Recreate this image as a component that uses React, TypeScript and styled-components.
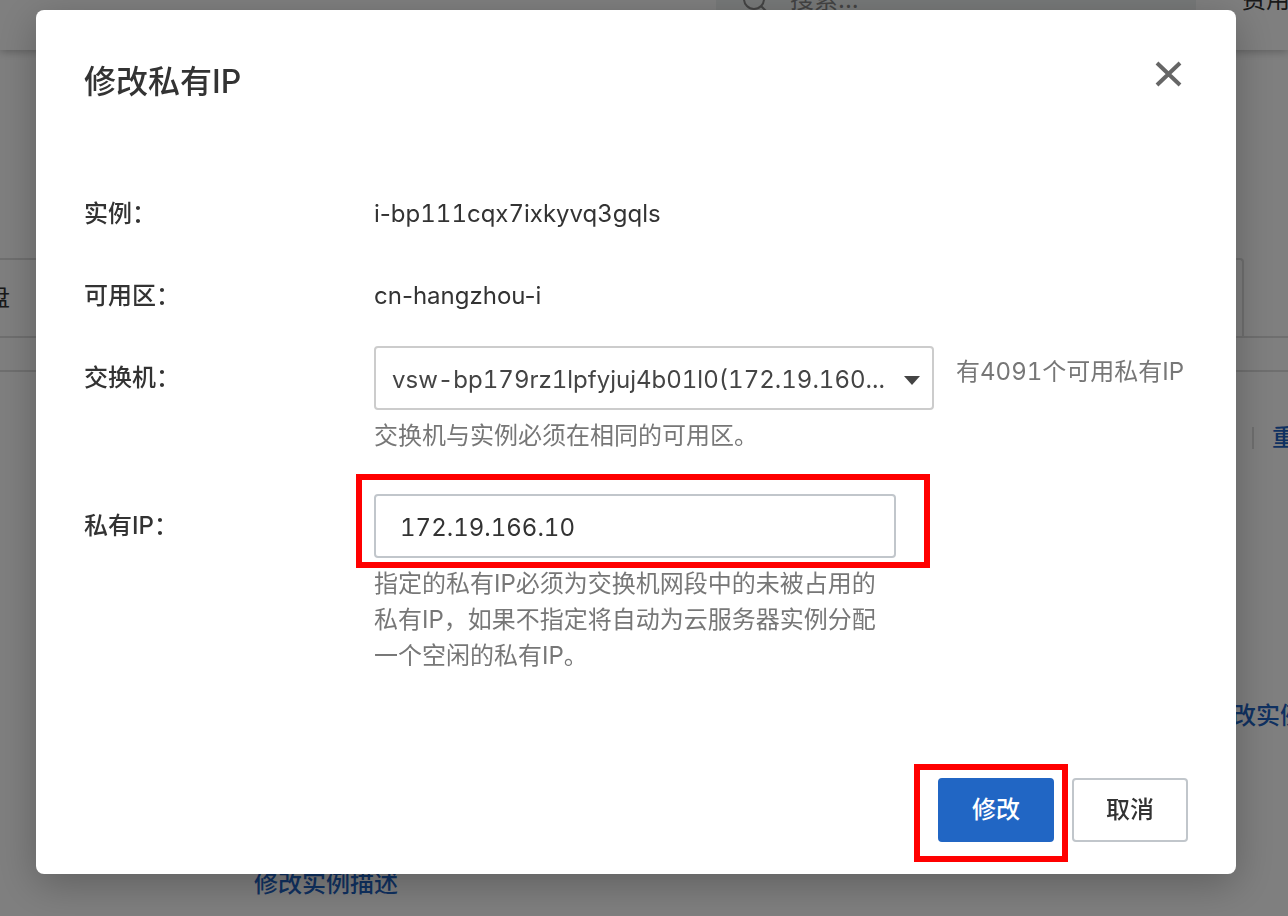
import React from "react";
import styled, { createGlobalStyle } from "styled-components";

const GlobalStyle = createGlobalStyle`
  *, *::before, *::after { box-sizing: border-box; }
  body {
    margin: 0;
    background: #fff;
    color: #333;
    font: 400 24px/36px Inter, "Noto Sans CJK SC", sans-serif;
  }
  button, input, select { font: inherit; color: inherit; }
`;

/* Console page behind the dialog, scrolled down by half of its top bar */
const Page = styled.div`
  height: 100vh;
  overflow: hidden;
`;

const TopBar = styled.header`
  display: flex;
  align-items: center;
  justify-content: flex-end;
  gap: 46px;
  height: 100px;
  margin-top: -50px;
  box-shadow: 0 2px 8px rgba(0, 0, 0, 0.25);
`;

const SearchBox = styled.div`
  display: flex;
  align-items: center;
  gap: 18px;
  width: 480px;
  height: 64px;
  padding: 0 24px;
  background: #eff3f2;
  color: #888;
`;

const NavItem = styled.span`
  width: 46px;
  overflow: hidden;
  white-space: nowrap;
`;

const Tabs = styled.nav`
  display: flex;
  height: 80px;
  margin-top: 208px;
  padding-right: 44px;
  border-bottom: 2px solid #dedede;
`;

const Tab = styled.span`
  flex: 1;
  display: flex;
  align-items: center;
  border: 2px solid #dedede;
  border-width: 2px 2px 0 0;
  border-top-right-radius: 4px;
`;

const TabText = styled.span`
  margin-left: -14px;
`;

const Panel = styled.section`
  margin-top: 32px;
  padding-top: 48px;
  border-top: 2px solid #dedede;
`;

const Actions = styled.div`
  display: flex;
  justify-content: flex-end;
  align-items: center;
  gap: 18px;
  margin-bottom: 242px;
`;

const Divider = styled.i`
  width: 2px;
  height: 22px;
  background: #dedede;
`;

const PageLink = styled.a<{ $width?: number }>`
  width: ${(p) => (p.$width ? `${p.$width}px` : "auto")};
  overflow: hidden;
  white-space: nowrap;
  color: #1f63c3;
  font-weight: 500;
  text-decoration: none;
`;

const LinkRow = styled.div<{ $end?: boolean }>`
  display: flex;
  justify-content: ${(p) => (p.$end ? "flex-end" : "flex-start")};
  margin-bottom: 132px;
  padding-left: 254px;
`;

const Backdrop = styled.div`
  position: fixed;
  inset: 0;
  overflow: auto;
  padding: 10px 52px 42px 36px;
  background: rgba(0, 0, 0, 0.5);
`;

const Dialog = styled.div`
  padding: 48px 48px 32px;
  border-radius: 8px;
  background: #fff;
  box-shadow: 0 10px 40px rgba(0, 0, 0, 0.26);
`;

const DialogHeader = styled.header`
  display: flex;
  justify-content: space-between;
  align-items: flex-start;
  margin-bottom: 76px;
`;

const Title = styled.h1`
  margin: 0;
  font-size: 32px;
  font-weight: 500;
  line-height: 48px;
`;

const CloseButton = styled.button`
  display: flex;
  padding: 0;
  margin-right: 4px;
  border: 0;
  background: none;
  color: #666;
`;

const Form = styled.form`
  display: flex;
  flex-direction: column;
  gap: 18px;
`;

const Row = styled.div`
  display: grid;
  grid-template-columns: 290px 1fr;
`;

const Label = styled.label`
  font-weight: 500;
  line-height: 64px;
`;

const Value = styled.output`
  line-height: 64px;
`;

/* Digits of equal width, for identifiers and counts */
const Digits = styled.span`
  font-variant-numeric: tabular-nums;
`;

const Field = styled.div`
  padding-bottom: 22px;
`;

const ControlLine = styled.div`
  display: flex;
  gap: 22px;
`;

const SelectWrap = styled.div`
  position: relative;
  width: 560px;
  color: #444;
`;

const Select = styled.select`
  display: block;
  width: 100%;
  height: 64px;
  padding: 4px 36px 0 16px;
  border: 2px solid #ccc;
  border-radius: 4px;
  background: #fff;
  appearance: none;
  text-overflow: ellipsis;
  font-variant-numeric: tabular-nums;
`;

const Arrow = styled.svg`
  position: absolute;
  top: 30px;
  right: 14px;
  pointer-events: none;
`;

const Available = styled.span`
  color: #777;
  line-height: 52px;
  white-space: nowrap;
`;

const Hint = styled.p`
  width: 522px;
  margin: 8px 0 0;
  color: #777;
`;

const Marked = styled.div<{ $inset: string }>`
  position: relative;
  width: fit-content;

  &::after {
    content: "";
    position: absolute;
    inset: ${(p) => p.$inset};
    border: 6px solid #f00;
    pointer-events: none;
  }
`;

const TextInput = styled.input`
  display: block;
  width: 522px;
  height: 64px;
  padding: 2px 24px 0;
  border: 2px solid #c1c6cb;
  border-radius: 4px;
  background: #fff;
  outline: none;
  font-variant-numeric: tabular-nums;
`;

const Footer = styled.footer`
  display: flex;
  justify-content: flex-end;
  gap: 18px;
  margin-top: 82px;
`;

const Button = styled.button<{ $primary?: boolean }>`
  display: block;
  width: 116px;
  height: 64px;
  padding: 0;
  border: 2px solid ${(p) => (p.$primary ? "#2166c4" : "#c1c6cb")};
  border-radius: 4px;
  background: ${(p) => (p.$primary ? "#2166c4" : "#fff")};
  color: ${(p) => (p.$primary ? "#fff" : "#333")};
  font-weight: 500;
`;

export default function App() {
  return (
    <>
      <GlobalStyle />
      <Page>
        <TopBar>
          <SearchBox>
            <svg width="32" height="32" viewBox="0 0 32 32" fill="none" stroke="currentColor" strokeWidth="2">
              <circle cx="14" cy="15" r="10" />
              <path d="M21 22l8 8" />
            </svg>
            搜索...
          </SearchBox>
          <NavItem>费用</NavItem>
        </TopBar>
        <Tabs>
          <Tab>
            <TabText>盘</TabText>
          </Tab>
        </Tabs>
        <Panel>
          <Actions>
            <Divider />
            <PageLink href="#restart" $width={16}>重启</PageLink>
          </Actions>
          <LinkRow $end>
            <PageLink href="#name" $width={80}>修改实例</PageLink>
          </LinkRow>
          <LinkRow>
            <PageLink href="#description">修改实例描述</PageLink>
          </LinkRow>
        </Panel>
      </Page>

      <Backdrop>
        <Dialog role="dialog" aria-modal="true" aria-labelledby="dialog-title">
          <DialogHeader>
            <Title id="dialog-title">修改私有IP</Title>
            <CloseButton type="button" aria-label="关闭">
              <svg width="32" height="32" viewBox="0 0 32 32" fill="none" stroke="currentColor" strokeWidth="4">
                <path d="M5 5l23 22M28 5L5 27" />
              </svg>
            </CloseButton>
          </DialogHeader>

          <Form id="ip-form" onSubmit={(e) => e.preventDefault()}>
            <Row>
              <Label htmlFor="instance">实例：</Label>
              <Value id="instance">i-<Digits>bp111cqx7ixkyvq3gqls</Digits></Value>
            </Row>
            <Row>
              <Label htmlFor="zone">可用区：</Label>
              <Value id="zone">cn-hangzhou-i</Value>
            </Row>
            <Row>
              <Label htmlFor="vswitch">交换机：</Label>
              <Field>
                <ControlLine>
                  <SelectWrap>
                    <Select id="vswitch">
                      <option>vsw-bp179rz1lpfyjuj4b01l0(172.19.160...</option>
                    </Select>
                    <Arrow width="16" height="9" viewBox="0 0 16 9" fill="currentColor">
                      <path d="M0 0h16L8 9z" />
                    </Arrow>
                  </SelectWrap>
                  <Available>有<Digits>4091</Digits>个可用私有IP</Available>
                </ControlLine>
                <Hint>交换机与实例必须在相同的可用区。</Hint>
              </Field>
            </Row>
            <Row>
              <Label htmlFor="private-ip">私有IP：</Label>
              <Field>
                <Marked $inset="-20px -34px -10px -18px">
                  <TextInput id="private-ip" type="text" defaultValue="172.19.166.10" />
                </Marked>
                <Hint>
                  指定的私有IP必须为交换机网段中的未被占用的私有IP，如果不指定将自动为云服务器实例分配一个空闲的私有IP。
                </Hint>
              </Field>
            </Row>
          </Form>

          <Footer>
            <Marked $inset="-14px -14px -20px -24px">
              <Button type="submit" form="ip-form" $primary>修改</Button>
            </Marked>
            <Button type="button">取消</Button>
          </Footer>
        </Dialog>
      </Backdrop>
    </>
  );
}
